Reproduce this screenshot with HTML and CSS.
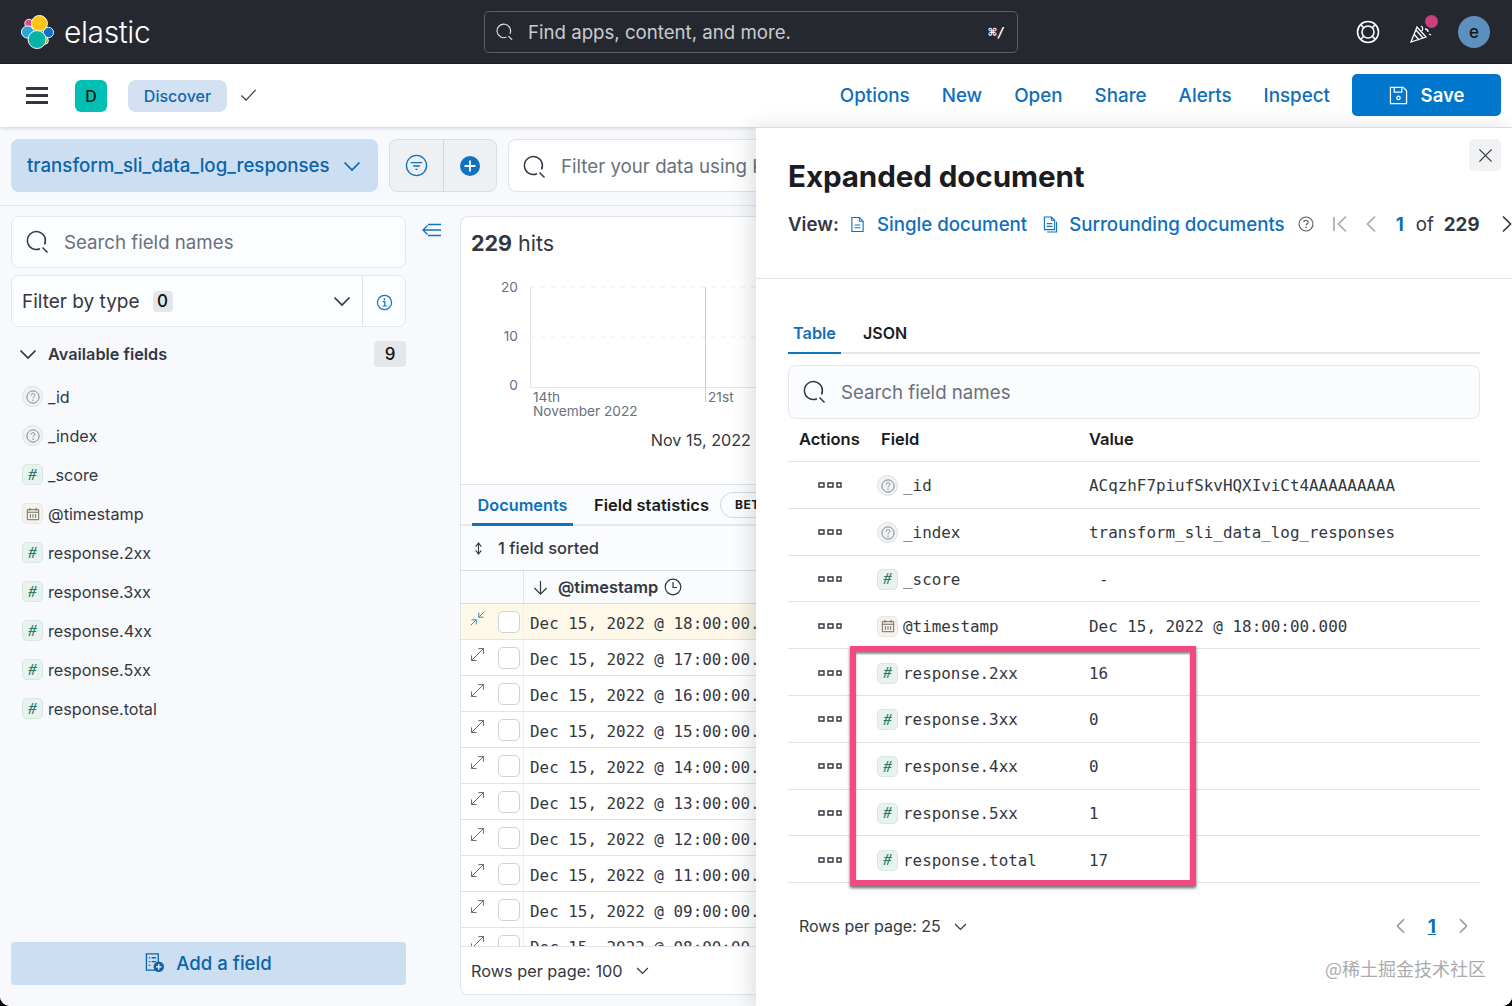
FILE: index.html
```html
<!DOCTYPE html>
<html lang="en">
<head>
<meta charset="utf-8">
<title>Discover - Elastic</title>
<link rel="stylesheet" href="styles.css">
</head>
<body>
<svg class="defs" width="0" height="0" aria-hidden="true">
  <symbol id="i-search" viewBox="0 0 24 24"><path d="M18.500 14.500A9 9 0 1 0 14 18.800M16.500 17.500l5 5" fill="none" stroke="currentColor" stroke-width="1.5"/></symbol>
  <symbol id="i-chev" viewBox="0 0 18 12"><path d="M1.5 2.5L9 10l7.5-7.5" fill="none" stroke="currentColor" stroke-width="1.7"/></symbol>
  <symbol id="i-q" viewBox="0 0 16 16"><circle cx="8" cy="8" r="7" fill="none" stroke="currentColor" stroke-width="1.1"/><path d="M5.8 6.3C5.8 5 6.8 4.2 8 4.2s2.2.8 2.2 2c0 1.6-2.2 1.6-2.2 3.3" fill="none" stroke="currentColor" stroke-width="1.1"/><circle cx="8" cy="11.6" r=".8" fill="currentColor"/></symbol>
  <symbol id="i-expand" viewBox="0 0 20 20"><path d="M3 17L17 3M11 3h6v6M3 11v6h6" fill="none" stroke="currentColor" stroke-width="1"/></symbol>
  <symbol id="i-doc" viewBox="0 0 16 18"><path d="M2 1.5h8l4 4v11H2zM10 1.5v4h4M5 9.5h6M5 12.500h6" fill="none" stroke="currentColor" stroke-width="1.2"/></symbol>
  <symbol id="i-docs" viewBox="0 0 16 18"><path d="M1.500 1h7.500l3.500 3.500v10h-11zM9 1v3.500h3.500M14.500 6v11h-10M4 8h6M4 11h6" fill="none" stroke="currentColor" stroke-width="1.200"/></symbol>
  <symbol id="i-cal" viewBox="0 0 16 16"><path d="M1.500 3h13v11.500h-13zM1.500 6h13M4.500 1v3M11.500 1v3M5 8v4.500M8 8v4.500M11 8v4.500" fill="none" stroke="currentColor" stroke-width="1.100"/></symbol>
  <symbol id="i-dots" viewBox="0 0 24 6"><path d="M1 1h5v4H1zM10 1h5v4h-5zM19 1h4v4h-4z" fill="none" stroke="currentColor" stroke-width="1.400"/></symbol>
  <symbol id="i-left" viewBox="0 0 12 18"><path d="M10 1.500L2.500 9l7.500 7.500" fill="none" stroke="currentColor" stroke-width="1.700"/></symbol>
  <symbol id="i-right" viewBox="0 0 12 18"><path d="M2 1.500L9.500 9 2 16.500" fill="none" stroke="currentColor" stroke-width="1.700"/></symbol>
</svg>

<div class="app">
  <header class="topbar">
    <div class="brand">
      <svg class="brand-mark" viewBox="0 0 36 36" aria-hidden="true">
        <circle cx="8.500" cy="9" r="4.500" fill="#e0478f" stroke="#fff"/>
        <circle cx="7" cy="18" r="6.500" fill="#2ba7e0" stroke="#fff"/>
        <circle cx="29" cy="18.500" r="5.500" fill="#0f73c0" stroke="#fff"/>
        <circle cx="25" cy="27" r="4" fill="#8ab832" stroke="#fff"/>
        <circle cx="19.500" cy="9" r="8.500" fill="#fec514" stroke="#fff"/>
        <circle cx="17" cy="26" r="9.500" fill="#07b3a6" stroke="#fff"/>
      </svg>
      <span class="brand-name">elastic</span>
    </div>
    <div class="global-search">
      <svg class="gs-icon"><use href="#i-search"/></svg>
      <span class="gs-text">Find apps, content, and more.</span>
      <span class="gs-key">⌘/</span>
    </div>
    <div class="top-actions">
      <svg class="lifebuoy" viewBox="0 0 24 24" aria-hidden="true"><circle cx="12" cy="12" r="10.500" fill="none" stroke="#fff" stroke-width="1.600"/><circle cx="12" cy="12" r="6" fill="none" stroke="#fff" stroke-width="1.600"/><path d="M4.500 4.500l3.500 3.500M19.500 4.500L16 8M4.500 19.500L8 16M19.500 19.500L16 16" stroke="#fff" stroke-width="1.600"/></svg>
      <span class="party">
        <svg class="party-icon" viewBox="0 0 24 24" aria-hidden="true"><path d="M2 22L8 7l9 10zM5 14l5 6M7 10l7 8M12 6c2 1 2 3 1 5M16 9c2 0 3 1 3 3M20 14l2 1" fill="none" stroke="#fff" stroke-width="1.300"/></svg>
        <i class="party-dot"></i>
      </span>
      <span class="avatar">e</span>
    </div>
  </header>

  <nav class="subnav">
    <div class="menu-icon"><i></i><i></i><i></i></div>
    <span class="space">D</span>
    <span class="crumb">Discover</span>
    <svg class="crumb-check" viewBox="0 0 18 14" aria-hidden="true"><path d="M1.500 7.500L6.500 12.500 16.500 1.500" fill="none" stroke="#343741" stroke-width="1.300"/></svg>
    <div class="nav-links">
      <a>Options</a><a>New</a><a>Open</a><a>Share</a><a>Alerts</a><a>Inspect</a>
    </div>
    <button class="save">
      <svg class="save-icon" viewBox="0 0 20 20" aria-hidden="true"><path d="M1.500 1.500h13.500l3.500 3.500v13.500h-17zM5.500 1.500v5h8v-5" fill="none" stroke="#fff" stroke-width="1.300"/><circle cx="10" cy="12.500" r="1.800" fill="none" stroke="#fff" stroke-width="1.300"/></svg>
      Save
    </button>
  </nav>

  <div class="workspace">
    <div class="querybar">
      <div class="dataview"><span>transform_sli_data_log_responses</span><svg class="dv-chev"><use href="#i-chev"/></svg></div>
      <div class="filter-group">
        <span class="fg-cell">
          <svg class="fg-filter" viewBox="0 0 24 24" aria-hidden="true"><circle cx="12" cy="12" r="10.500" fill="none" stroke="#0f73c0" stroke-width="1.400"/><path d="M6 9h12M8.500 12.500h7M11 16h2" stroke="#0f73c0" stroke-width="1.400"/></svg>
        </span>
        <span class="fg-cell">
          <svg class="fg-plus" viewBox="0 0 20 20" aria-hidden="true"><circle cx="10" cy="10" r="10" fill="#0f73c0"/><path d="M10 4.500v11M4.500 10h11" stroke="#fff" stroke-width="1.800"/></svg>
        </span>
      </div>
      <div class="query">
        <svg class="q-icon"><use href="#i-search"/></svg>
        <span class="q-text">Filter your data using KQL syntax</span>
      </div>
    </div>

    <div class="content">
      <aside class="sidebar">
        <div class="box side-search"><svg class="q-icon"><use href="#i-search"/></svg><span>Search field names</span></div>
        <div class="box side-filter">
          <span class="sf-label">Filter by type</span><span class="sf-count">0</span>
          <svg class="sf-chev"><use href="#i-chev"/></svg>
          <span class="sf-info"><svg viewBox="0 0 18 18" aria-hidden="true"><circle cx="9" cy="9" r="7.500" fill="none" stroke="#0f73c0" stroke-width="1.300"/><path d="M7 8h2.300v4.500M7 12.700h4.500" fill="none" stroke="#0f73c0" stroke-width="1.300"/><circle cx="9" cy="5.500" r="1" fill="#0f73c0"/></svg></span>
        </div>
        <div class="avail">
          <svg class="avail-chev"><use href="#i-chev"/></svg>
          <span class="avail-title">Available fields</span>
          <span class="avail-count">9</span>
        </div>
        <ul class="fields">
          <li><span class="tok tok-q"><svg><use href="#i-q"/></svg></span>_id</li>
          <li><span class="tok tok-q"><svg><use href="#i-q"/></svg></span>_index</li>
          <li><span class="tok tok-n">#</span>_score</li>
          <li><span class="tok tok-d"><svg><use href="#i-cal"/></svg></span>@timestamp</li>
          <li><span class="tok tok-n">#</span>response.2xx</li>
          <li><span class="tok tok-n">#</span>response.3xx</li>
          <li><span class="tok tok-n">#</span>response.4xx</li>
          <li><span class="tok tok-n">#</span>response.5xx</li>
          <li><span class="tok tok-n">#</span>response.total</li>
        </ul>
        <button class="add-field">
          <svg class="af-icon" viewBox="0 0 20 20" aria-hidden="true"><path d="M1.500 1h12.500v17H1.500zM4 5h1.500M7 5h4.500M4 9h1.500M7 9h4.500M4 13h1.500" fill="none" stroke="#0b64a8" stroke-width="1.400"/><circle cx="14.500" cy="14.500" r="5.500" fill="#0b64a8"/><path d="M14.500 11.500v6M11.500 14.500h6" stroke="#fff" stroke-width="1.300"/></svg>
          Add a field
        </button>
      </aside>

      <div class="collapse">
        <svg viewBox="0 0 20 14" aria-hidden="true"><path d="M6 1.500h13M1 7h18M6 12.500h13M5.500 2.500L1 7l4.500 4.500" fill="none" stroke="#0f73c0" stroke-width="1.300"/></svg>
      </div>

      <section class="panel">
        <div class="hits"><b>229</b> hits</div>
        <svg class="chart" viewBox="0 0 296 178" aria-label="Histogram">
          <path class="grid" d="M70 8h226M70 58h226"/>
          <path class="axis" d="M69.500 8v100.500H296"/>
          <path class="marker" d="M244.500 8v115"/>
          <text x="57" y="13" text-anchor="end">20</text>
          <text x="57" y="62" text-anchor="end">10</text>
          <text x="57" y="111" text-anchor="end">0</text>
          <text x="72" y="123">14th</text>
          <text x="72" y="137">November 2022</text>
          <text x="247" y="123">21st</text>
          <text class="chart-date" x="290" y="167" text-anchor="end">Nov 15, 2022</text>
        </svg>
        <div class="doc-tabs">
          <span class="doc-tab on">Documents</span>
          <span class="doc-tab">Field statistics</span>
          <span class="beta">BETA</span>
        </div>
        <div class="sorted">
          <svg viewBox="0 0 14 16" aria-hidden="true"><path d="M4 6l3-4 3 4M4 10l3 4 3-4M7 2v12" fill="none" stroke="#343741" stroke-width="1.200"/></svg>
          <span>1 field sorted</span>
        </div>
        <div class="grid-head">
          <span class="gh-ctl"></span>
          <span class="gh-time">
            <svg class="gh-arrow" viewBox="0 0 16 16" aria-hidden="true"><path d="M8 1v14M1.500 8.500L8 15l6.500-6.500" fill="none" stroke="#343741" stroke-width="1.300"/></svg>
            <b>@timestamp</b>
            <svg class="gh-clock" viewBox="0 0 18 18" aria-hidden="true"><circle cx="9" cy="9" r="7.800" fill="none" stroke="#343741" stroke-width="1.200"/><path d="M9 4v5.500h4" fill="none" stroke="#343741" stroke-width="1.200"/></svg>
          </span>
        </div>
        <div class="grid-body">
          <div class="grow open"><span class="gc"><svg class="exp" viewBox="0 0 20 20" aria-hidden="true"><path d="M2 18l6-6M18 2l-6 6M3 11.500h5.500V17M17 8.500h-5.500V3" fill="none" stroke="#0f73c0" stroke-width="1"/></svg><i class="cb"></i></span><span class="gt">Dec 15, 2022 @ 18:00:00.000</span></div>
          <div class="grow"><span class="gc"><svg class="exp"><use href="#i-expand"/></svg><i class="cb"></i></span><span class="gt">Dec 15, 2022 @ 17:00:00.000</span></div>
          <div class="grow"><span class="gc"><svg class="exp"><use href="#i-expand"/></svg><i class="cb"></i></span><span class="gt">Dec 15, 2022 @ 16:00:00.000</span></div>
          <div class="grow"><span class="gc"><svg class="exp"><use href="#i-expand"/></svg><i class="cb"></i></span><span class="gt">Dec 15, 2022 @ 15:00:00.000</span></div>
          <div class="grow"><span class="gc"><svg class="exp"><use href="#i-expand"/></svg><i class="cb"></i></span><span class="gt">Dec 15, 2022 @ 14:00:00.000</span></div>
          <div class="grow"><span class="gc"><svg class="exp"><use href="#i-expand"/></svg><i class="cb"></i></span><span class="gt">Dec 15, 2022 @ 13:00:00.000</span></div>
          <div class="grow"><span class="gc"><svg class="exp"><use href="#i-expand"/></svg><i class="cb"></i></span><span class="gt">Dec 15, 2022 @ 12:00:00.000</span></div>
          <div class="grow"><span class="gc"><svg class="exp"><use href="#i-expand"/></svg><i class="cb"></i></span><span class="gt">Dec 15, 2022 @ 11:00:00.000</span></div>
          <div class="grow"><span class="gc"><svg class="exp"><use href="#i-expand"/></svg><i class="cb"></i></span><span class="gt">Dec 15, 2022 @ 09:00:00.000</span></div>
          <div class="grow"><span class="gc"><svg class="exp"><use href="#i-expand"/></svg><i class="cb"></i></span><span class="gt">Dec 15, 2022 @ 08:00:00.000</span></div>
        </div>
        <div class="panel-foot">Rows per page: 100<svg class="rp-chev"><use href="#i-chev"/></svg></div>
      </section>
    </div>

    <aside class="flyout">
      <button class="close" aria-label="Close"><svg viewBox="0 0 16 16" aria-hidden="true"><path d="M1.500 1.500l13 13M14.500 1.500l-13 13" stroke="#343741" stroke-width="1.300"/></svg></button>
      <div class="fly-head">
        <h1>Expanded document</h1>
        <div class="fly-view">
          <b class="view-lbl">View:</b>
          <svg class="v-doc"><use href="#i-doc"/></svg><a class="v-link">Single document</a>
          <svg class="v-doc v-second"><use href="#i-docs"/></svg><a class="v-link">Surrounding documents</a>
          <svg class="v-help"><use href="#i-q"/></svg>
          <span class="pager">
            <svg class="p-first" viewBox="0 0 16 18" aria-hidden="true"><path d="M2 2v14M14 1.500L6.500 9 14 16.500" fill="none" stroke="#a5abb5" stroke-width="1.700"/></svg>
            <svg class="p-prev"><use href="#i-left"/></svg>
            <b class="p-cur">1</b><span class="p-of">of</span><b class="p-total">229</b>
            <svg class="p-next"><use href="#i-right"/></svg>
          </span>
        </div>
      </div>
      <div class="fly-body">
        <div class="fly-tabs"><span class="fly-tab on">Table</span><span class="fly-tab">JSON</span></div>
        <div class="box fly-search"><svg class="q-icon"><use href="#i-search"/></svg><span>Search field names</span></div>
        <div class="dt-head"><b>Actions</b><b>Field</b><b>Value</b></div>
        <div class="dt-row"><span class="dt-act"><svg><use href="#i-dots"/></svg></span><span class="dt-field"><span class="tok tok-q"><svg><use href="#i-q"/></svg></span>_id</span><span class="dt-val">ACqzhF7piufSkvHQXIviCt4AAAAAAAAA</span></div>
        <div class="dt-row"><span class="dt-act"><svg><use href="#i-dots"/></svg></span><span class="dt-field"><span class="tok tok-q"><svg><use href="#i-q"/></svg></span>_index</span><span class="dt-val">transform_sli_data_log_responses</span></div>
        <div class="dt-row"><span class="dt-act"><svg><use href="#i-dots"/></svg></span><span class="dt-field"><span class="tok tok-n">#</span>_score</span><span class="dt-val dt-dash">-</span></div>
        <div class="dt-row"><span class="dt-act"><svg><use href="#i-dots"/></svg></span><span class="dt-field"><span class="tok tok-d"><svg><use href="#i-cal"/></svg></span>@timestamp</span><span class="dt-val">Dec 15, 2022 @ 18:00:00.000</span></div>
        <div class="dt-row"><span class="dt-act"><svg><use href="#i-dots"/></svg></span><span class="dt-field"><span class="tok tok-n">#</span>response.2xx</span><span class="dt-val">16</span></div>
        <div class="dt-row"><span class="dt-act"><svg><use href="#i-dots"/></svg></span><span class="dt-field"><span class="tok tok-n">#</span>response.3xx</span><span class="dt-val">0</span></div>
        <div class="dt-row"><span class="dt-act"><svg><use href="#i-dots"/></svg></span><span class="dt-field"><span class="tok tok-n">#</span>response.4xx</span><span class="dt-val">0</span></div>
        <div class="dt-row"><span class="dt-act"><svg><use href="#i-dots"/></svg></span><span class="dt-field"><span class="tok tok-n">#</span>response.5xx</span><span class="dt-val">1</span></div>
        <div class="dt-row"><span class="dt-act"><svg><use href="#i-dots"/></svg></span><span class="dt-field"><span class="tok tok-n">#</span>response.total</span><span class="dt-val">17</span></div>
        <div class="dt-foot">
          <span class="dt-rows">Rows per page: 25<svg class="rp-chev"><use href="#i-chev"/></svg></span>
          <span class="dt-pages"><svg class="dp-arrow"><use href="#i-left"/></svg><a>1</a><svg class="dp-arrow"><use href="#i-right"/></svg></span>
        </div>
      </div>
      <div class="annotation"></div>
      <div class="watermark">@稀土掘金技术社区</div>
    </aside>
  </div>
</div>
</body>
</html>
```
FILE: styles.css
```css
* { box-sizing: border-box; }
html, body { margin: 0; padding: 0; }
body {
  width: 1512px; height: 1006px; overflow: hidden; background: #000;
  font-family: Inter, "Liberation Sans", sans-serif; color: #343741;
}
.defs { position: absolute; }
svg { display: block; flex: none; }
a { color: inherit; }
button { font-family: inherit; border: 0; }
.app { width: 1512px; height: 1006px; overflow: hidden; border-radius: 0 0 10px 10px; display: flex; flex-direction: column; background: #fff; }

/* top bar */
.topbar { height: 64px; flex: none; background: #25282f; display: flex; align-items: center; padding: 0 22px 0 21px; border-bottom: 1px solid #1c1e23; }
.brand { width: 463px; display: flex; align-items: center; gap: 9px; }
.brand-mark { width: 34px; height: 34px; }
.brand-name { font-size: 30px; font-weight: 300; color: #fff; letter-spacing: -.4px; line-height: 36px; }
.global-search { width: 534px; height: 42px; border: 1px solid #5a5e68; border-radius: 5px; display: flex; align-items: center; padding: 0 12px 0 11px; color: #d4d6da; }
.gs-icon { width: 18px; height: 18px; color: #e4e5e8; }
.gs-text { margin-left: 14px; font-size: 18.650px; flex: 1; color: #c9ccd1; }
.gs-key { font-family: "DejaVu Sans Mono", monospace; font-size: 14px; font-weight: 700; color: #fff; }
.top-actions { margin-left: auto; display: flex; align-items: center; }
.lifebuoy { width: 24px; height: 24px; }
.party { margin-left: 29px; position: relative; display: block; width: 24px; height: 24px; }
.party-icon { width: 24px; height: 24px; }
.party-dot { position: absolute; left: 16px; top: -5px; width: 13px; height: 13px; border-radius: 50%; background: #c9407c; }
.avatar { margin-left: 25px; width: 32px; height: 32px; border-radius: 50%; background: #5d8fbf; color: #14161a; font-size: 17px; font-weight: 500; display: flex; align-items: center; justify-content: center; }

/* sub navigation */
.subnav { height: 63px; flex: none; background: #fff; display: flex; align-items: center; padding: 0 11px 1px 26px; box-shadow: 0 1px 4px rgba(0,0,0,.18); position: relative; z-index: 2; }
.menu-icon { width: 22px; display: flex; flex-direction: column; gap: 4px; }
.menu-icon i { display: block; height: 3px; background: #343741; }
.space { margin: 1px 0 0 27px; width: 32px; height: 32px; border-radius: 6px; background: #00bfb3; color: #111; display: flex; align-items: center; justify-content: center; font-size: 16px; font-weight: 500; }
.crumb { margin: 1px 0 0 21px; width: 99px; height: 32px; border-radius: 8px; background: #d3e1f3; color: #0f66ad; display: flex; align-items: center; justify-content: center; font-size: 16px; font-weight: 500; }
.crumb-check { margin-left: 13px; width: 17px; height: 14px; }
.nav-links { margin-left: auto; display: flex; gap: 32px; color: #0f6fbb; font-size: 18.800px; font-weight: 500; }
.save { margin-left: 22px; width: 149px; height: 42px; background: #0077cc; color: #fff; border-radius: 5px; font-size: 18.500px; font-weight: 600; display: flex; align-items: center; justify-content: center; gap: 13px; }
.save-icon { width: 19px; height: 19px; }

/* workspace */
.workspace { position: relative; flex: 1; min-height: 0; background: #f7f9fc; display: flex; flex-direction: column; }
.querybar { height: 79px; flex: none; padding: 12px 756px 0 11px; display: flex; gap: 11px; border-bottom: 1px solid #e2e5ea; }
.dataview { width: 367px; height: 53px; flex: none; background: #ccdff2; border-radius: 8px; color: #0b64a8; font-size: 18.700px; font-weight: 500; display: flex; align-items: center; padding: 0 17px 0 16px; justify-content: space-between; }
.dv-chev { width: 18px; height: 12px; }
.filter-group { width: 108px; height: 53px; flex: none; border: 1px solid #d9dde3; border-radius: 8px; background: #eef0f3; display: flex; overflow: hidden; }
.fg-cell { flex: 1; display: flex; align-items: center; justify-content: center; }
.fg-cell + .fg-cell { border-left: 1px solid #d3d6dc; }
.fg-filter { width: 23px; height: 23px; }
.fg-plus { width: 20px; height: 20px; }
.query { flex: 1; min-width: 0; height: 53px; background: #fff; border: 1px solid #e1e4ea; border-right: 0; border-radius: 8px 0 0 8px; display: flex; align-items: center; padding: 2px 0 0 14px; gap: 14px; font-size: 18.700px; color: #69707d; white-space: nowrap; overflow: hidden; }
.q-text { flex: 1; min-width: 0; overflow: hidden; line-height: 28px; }
.q-icon { width: 24px; height: 24px; color: #343741; }

.content { flex: 1; min-height: 0; display: flex; padding: 10px 756px 11px 11px; }
.sidebar { width: 395px; flex: none; display: flex; flex-direction: column; }
.box { background: #fcfdfe; border: 1px solid #e4e7ec; border-radius: 8px; display: flex; align-items: center; font-size: 18.700px; }
.side-search { height: 52px; padding-left: 14px; gap: 14px; color: #69707d; }
.side-filter { margin-top: 7px; height: 52px; padding-left: 10px; color: #343741; font-size: 19px; }
.sf-label { font-weight: 400; }
.sf-count { margin-left: 13px; width: 20px; height: 21px; border-radius: 4px; background: #e3e6eb; font-size: 17px; font-weight: 500; color: #111; display: flex; align-items: center; justify-content: center; }
.sf-chev { margin-left: auto; width: 18px; height: 12px; }
.sf-info { margin-left: 11px; width: 43px; height: 100%; border-left: 1px solid #dfe2e7; display: flex; align-items: center; justify-content: center; }
.sf-info svg { width: 17px; height: 17px; margin-top: 2px; }
.avail { margin-top: 14px; height: 26px; display: flex; align-items: center; padding-left: 8px; }
.avail-chev { width: 18px; height: 12px; }
.avail-title { margin-left: 11px; font-size: 16.300px; font-weight: 600; color: #343741; }
.avail-count { margin-left: auto; width: 32px; height: 26px; border-radius: 4px; background: #e3e6eb; color: #111; font-size: 17px; font-weight: 500; display: flex; align-items: center; justify-content: center; }
.fields { list-style: none; margin: 10px 0 0; padding: 0 0 0 11px; flex: 1; }
.fields li { height: 39px; display: flex; align-items: center; font-size: 16.200px; color: #343741; gap: 5px; }
.tok { width: 21px; height: 21px; flex: none; display: flex; align-items: center; justify-content: center; border: 1px solid; font-family: "Liberation Serif", serif; }
.tok svg { width: 14px; height: 14px; }
.tok-q { border-radius: 50%; background: #f1f2f4; border-color: #dcdee2; color: #7b818c; }
.tok-n { border-radius: 5px; background: #e8f3ef; border-color: #d5e8e1; color: #2b7a62; font-style: italic; font-weight: 700; font-size: 16px; }
.tok-d { border-radius: 5px; background: #f6f2ec; border-color: #ebe6de; color: #6d6a62; }
.add-field { height: 43px; flex: none; margin-bottom: 10px; padding: 0 0 2px; background: #ccdff2; border-radius: 4px; color: #0b64a8; font-size: 18.600px; font-weight: 500; display: flex; align-items: center; justify-content: center; gap: 12px; }
.af-icon { width: 19px; height: 19px; }
.collapse { width: 54px; flex: none; padding: 7px 0 0 16px; }
.collapse svg { width: 20px; height: 14px; }

/* main panel */
.panel { flex: 1; min-width: 0; background: #fff; border: 1px solid #e1e4ea; border-right: 0; border-radius: 8px 0 0 8px; display: flex; flex-direction: column; overflow: hidden; }
.hits { height: 62px; flex: none; padding: 12px 0 0 10px; font-size: 21.500px; line-height: 28px; color: #343741; }
.hits b { font-weight: 700; }
.chart { width: 296px; height: 178px; margin-left: 0; flex: none; overflow: hidden; }
.chart text { font-family: Inter, "Liberation Sans", sans-serif; font-size: 13.700px; fill: #69707d; }
.chart .chart-date { font-size: 16.200px; fill: #343741; }
.grid { stroke: #eceef1; stroke-dasharray: 4 6; fill: none; }
.axis { stroke: #e3e5e9; fill: none; }
.marker { stroke: #c8cbd0; fill: none; }
.doc-tabs { height: 42px; flex: none; margin-top: 27px; display: flex; align-items: center; padding-left: 11px; border-top: 1px solid #e1e4ea; border-bottom: 2px solid #e6e8ec; background: #fbfcfd; }
.doc-tab { height: 100%; padding: 0 5px; display: flex; align-items: center; font-size: 16.500px; font-weight: 600; color: #1a1c21; margin-right: 16px; white-space: nowrap; }
.doc-tab.on { width: 101px; flex: none; justify-content: center; color: #0f6fbb; border-bottom: 3px solid #0f73c0; margin-bottom: -2px; height: calc(100% + 2px); padding-top: 2px; font-size: 16.300px; }
.beta { margin-left: -10px; height: 26px; width: 60px; border: 1px solid #d3dae6; border-radius: 13px; font-size: 12px; font-weight: 700; color: #1a1c21; display: flex; align-items: center; padding-left: 14px; letter-spacing: .5px; flex: none; }
.sorted { height: 44px; flex: none; display: flex; align-items: center; padding-left: 11px; gap: 13px; font-size: 16.500px; font-weight: 500; color: #343741; background: #fbfcfd; }
.sorted svg { width: 13px; height: 15px; }
.grid-head { height: 34px; flex: none; display: flex; border-top: 1px solid #d9dce1; border-bottom: 1px solid #d9dce1; background: #fafbfd; }
.gh-ctl { width: 63px; flex: none; border-right: 1px solid #e0e3e8; }
.gh-time { flex: 1; display: flex; align-items: center; padding-left: 9px; gap: 10px; font-size: 16.400px; color: #343741; }
.gh-time b { font-weight: 600; }
.gh-arrow { width: 15px; height: 15px; }
.gh-clock { width: 18px; height: 18px; margin-left: -4px; }
.grid-body { flex: 1; min-height: 0; overflow: hidden; }
.grow { height: 36px; display: flex; border-bottom: 1px solid #e1e4e9; }
.grow.open { background: #fdf8e8; }
.gc { width: 63px; flex: none; display: flex; align-items: flex-start; padding: 7px 0 0 8px; gap: 12px; border-right: 1px solid #eceef2; }
.exp { width: 17px; height: 17px; color: #4a4f5a; margin-top: -1px; }
.cb { display: block; width: 22px; height: 22px; border: 1px solid #ced2d9; border-radius: 5px; background: #fff; }
.gt { padding: 0 0 0 6px; font-family: "DejaVu Sans Mono", "Liberation Mono", monospace; font-size: 15.900px; line-height: 40px; color: #343741; white-space: nowrap; }
.panel-foot { height: 48px; flex: none; display: flex; align-items: center; padding-left: 10px; font-size: 16.300px; color: #343741; border-top: 1px solid #e1e4e9; background: #fff; }
.rp-chev { width: 13px; height: 9px; margin-left: 13px; }

/* flyout */
.flyout { position: absolute; left: 756px; top: 0; right: 0; bottom: 0; background: #fff; border-top: 1px solid #d9dbe0; box-shadow: -6px 0 18px rgba(30,40,60,.14); overflow: hidden; z-index: 3; }
.close { position: absolute; right: 11px; top: 11px; width: 32px; height: 32px; background: #f1f2f4; border-radius: 5px; display: flex; align-items: center; justify-content: center; padding: 0; }
.close svg { width: 15px; height: 15px; }
.fly-head { height: 151px; padding: 28px 0 0 32px; border-bottom: 1px solid #dfe2e7; }
h1 { margin: 0; font-size: 29.600px; line-height: 40px; font-weight: 700; color: #1a1c21; letter-spacing: -.1px; }
.fly-view { margin-top: 14px; display: flex; align-items: center; height: 28px; font-size: 18.700px; white-space: nowrap; }
.view-lbl { font-weight: 600; color: #343741; }
.v-doc { width: 15px; height: 17px; color: #0f73c0; margin: 0 12px 0 11px; }
.v-second { margin-left: 16px; margin-right: 11px; }
.v-link { color: #0f6fbb; font-weight: 500; }
.v-help { width: 16px; height: 16px; margin-left: 13px; color: #535966; }
.pager { display: flex; align-items: center; margin-left: 18px; }
.p-first { width: 16px; height: 18px; }
.p-prev { width: 12px; height: 18px; margin-left: 17px; color: #a5abb5; }
.p-cur { margin-left: 19px; color: #0f6fbb; font-weight: 700; }
.p-of { margin-left: 12px; color: #343741; }
.p-total { margin-left: 10px; color: #343741; font-weight: 700; }
.p-next { width: 12px; height: 18px; margin-left: 21px; color: #343741; }
.fly-body { padding: 0 32px; }
.fly-tabs { margin-top: 35px; height: 40px; display: flex; border-bottom: 2px solid #e4e7ec; }
.fly-tab { padding: 0 5px 2px; display: flex; align-items: center; height: 40px; font-size: 16px; font-weight: 600; color: #1a1c21; margin-right: 17px; }
.fly-tab.on { width: 53px; padding-bottom: 0; justify-content: center; color: #0f6fbb; border-bottom: 2px solid #0f73c0; font-size: 16.300px; }
.fly-search { margin-top: 11px; height: 54px; padding-left: 14px; gap: 14px; color: #69707d; background: #fbfcfd; }
.dt-head, .dt-row { display: grid; align-items: center; border-bottom: 1px solid #dfe2e7; }
.dt-head { height: 43px; padding-bottom: 2px; font-size: 16.500px; color: #1a1c21; grid-template-columns: 93px 208px 1fr; }
.dt-head b { font-weight: 600; }
.dt-head b:first-child { padding-left: 11px; }
.dt-row { height: 46.800px; grid-template-columns: 82px 219px 1fr; padding-top: 2px; font-family: "DejaVu Sans Mono", "Liberation Mono", monospace; font-size: 15.900px; color: #343741; }
.dt-act { display: flex; padding-left: 30px; }
.dt-act svg { width: 24px; height: 6px; color: #343741; margin-top: -1px; }
.dt-field { display: flex; align-items: center; gap: 5px; margin-left: 7px; }
.dt-dash { padding-left: 10px; }
.dt-foot { height: 86px; display: flex; align-items: center; justify-content: space-between; padding: 0 11px; font-family: Inter, "Liberation Sans", sans-serif; font-size: 16px; color: #343741; }
.dt-rows { display: flex; align-items: center; }
.dt-pages { display: flex; align-items: center; gap: 22px; }
.dt-pages a { color: #0f6fbb; font-weight: 700; text-decoration: underline; font-size: 19px; }
.dp-arrow { width: 11px; height: 16px; color: #8f95a0; }

/* annotation drawn over the screenshot */
.annotation { position: absolute; left: 94px; top: 518px; width: 346px; height: 240px; border: 6px solid #f04a82; box-shadow: 0 2px 3px rgba(40,40,40,.7), inset 0 2px 2px rgba(40,40,40,.5); pointer-events: none; }
.watermark { position: absolute; right: 26px; bottom: 25px; font-family: "Noto Sans CJK SC", "Liberation Sans", sans-serif; font-size: 18px; color: #a9abae; }
```
